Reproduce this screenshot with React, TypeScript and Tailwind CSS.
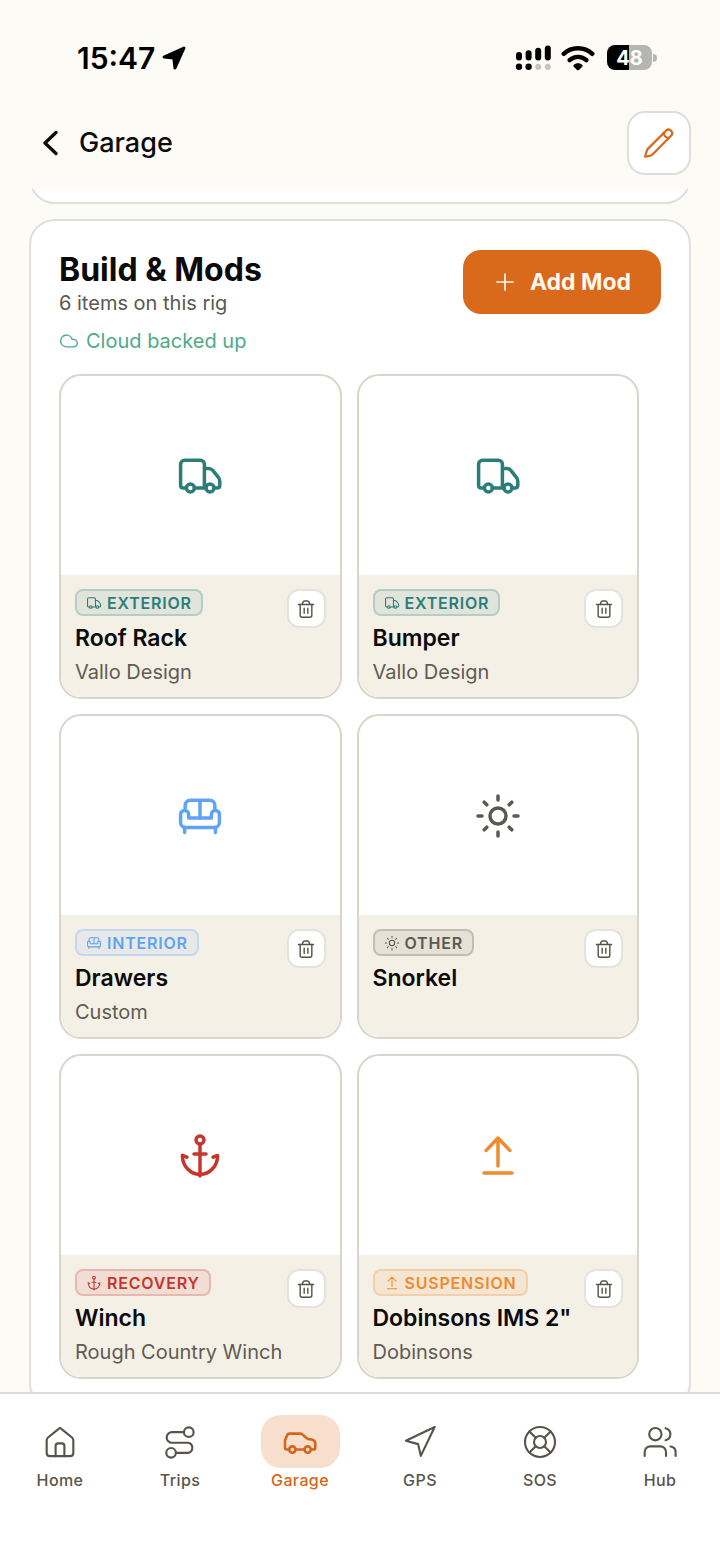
import React from 'react';
import clsx from 'clsx';
import { Cloud, LifeBuoy } from 'lucide-react';

type IconProps = { className?: string };

const Icon: React.FC<IconProps & { children: React.ReactNode }> = ({ className, children }) => (
  <svg
    viewBox="0 0 24 24"
    fill="none"
    stroke="currentColor"
    strokeLinecap="round"
    strokeLinejoin="round"
    aria-hidden="true"
    className={clsx('shrink-0 overflow-visible', className)}
  >
    {children}
  </svg>
);

const TruckIcon: React.FC<IconProps> = ({ className }) => (
  <Icon className={className}>
    <path d="M5 18H3.7C2.9 18 2.3 17.4 2.3 16.6V6.1a2 2 0 0 1 2-2h7.9a2 2 0 0 1 2 2V18M9.2 18H15" />
    <path d="M14.2 8.2h2c1 0 1.6.3 2.2 1l2.6 3.2c.6.7.9 1.3.9 2.2v2c0 .9-.5 1.4-1.4 1.4H19" />
    <circle cx="7.2" cy="18" r="2" />
    <circle cx="17" cy="18" r="2" />
  </Icon>
);

const SofaIcon: React.FC<IconProps> = ({ className }) => (
  <Icon className={className}>
    <path d="M4.6 8.8V6.6a2.5 2.5 0 0 1 2.5-2.5h9.8a2.5 2.5 0 0 1 2.5 2.5v2.2M12 4.1V13" />
    <path d="M6.3 13h11.4v-1.8a2 2 0 0 1 4 0v4.1a2.5 2.5 0 0 1-2.5 2.5H4.8a2.5 2.5 0 0 1-2.5-2.5v-4.1a2 2 0 0 1 4 0V13Z" />
    <path d="M4.3 17.8v2.4M19.7 17.8v2.4" />
  </Icon>
);

const SunIcon: React.FC<IconProps> = ({ className }) => (
  <Icon className={className}>
    <circle cx="12" cy="12" r="4" />
    <path d="M12 2v2M12 20v2M2 12h2M20 12h2M5.1 5.1l1.3 1.3M17.6 17.6l1.3 1.3M5.1 18.9l1.3-1.3M17.6 6.4l1.3-1.3" />
  </Icon>
);

const AnchorIcon: React.FC<IconProps> = ({ className }) => (
  <Icon className={className}>
    <circle cx="12" cy="4" r="2" />
    <path d="M12 6v16M9 11h6" />
    <path d="M5.5 12.6l-2.3-.9c0 5.2 3.8 9.5 8.8 9.5s8.8-4.3 8.8-9.5l-2.3.9" />
  </Icon>
);

const LiftIcon: React.FC<IconProps> = ({ className }) => (
  <Icon className={className}>
    <path d="M12 17V3M6.1 9.2 12 3l5.9 6.2M5 20.5h14" />
  </Icon>
);

const TrashIcon: React.FC<IconProps> = ({ className }) => (
  <Icon className={className}>
    <path d="M3 6.5h18M7.5 6.5 8.3 4c.3-1.1.9-1.7 2-1.7h3.4c1.1 0 1.7.6 2 1.7l.8 2.5" />
    <path d="M5 6.5v13c0 1.5 1 2.3 2.3 2.3h9.4c1.3 0 2.3-.8 2.3-2.3v-13M9.8 11v6M14.2 11v6" />
  </Icon>
);

const PencilIcon: React.FC<IconProps> = ({ className }) => (
  <Icon className={className}>
    <path d="M17.4 2.6 3.6 16.4c-.5.5-.7 1-.8 1.6L1.6 22.3l4.2-.9c.7-.2 1.200-.6 1.700-1.100L21.200 6.400a2.700 2.700 0 0 0-3.800-3.800Z" />
    <path d="M15.600 4.400c.1 2.200 1.600 3.800 3.800 3.800" />
  </Icon>
);

const HomeIcon: React.FC<IconProps> = ({ className }) => (
  <Icon className={className}>
    <path d="M2 10.7c0-.9.3-1.5 1-2.1l8-6.5c.7-.6 1.3-.6 2 0l8 6.5c.7.6 1 1.2 1 2.1V20c0 1.6-.8 2.6-2.4 2.6H4.4C2.8 22.6 2 21.6 2 20Z" />
    <path d="M8.7 22.6V15c0-1.4.7-2 1.9-2h2.8c1.2 0 1.9.6 1.9 2v7.6" />
  </Icon>
);

const RouteIcon: React.FC<IconProps> = ({ className }) => (
  <Icon className={className}>
    <circle cx="18.6" cy="4.6" r="3.6" />
    <circle cx="5.3" cy="20.1" r="3.6" />
    <path d="M15 4.6H6a4 4 0 0 0 0 8h12.2a3.9 3.9 0 0 1 0 7.6H8.9" />
  </Icon>
);

const CarIcon: React.FC<IconProps> = ({ className }) => (
  <Icon className={className}>
    <path d="M4.8 17H3.4C2.5 17 2 16.5 2 15.6v-4.2c0-.5.1-.9.3-1.3l1.1-2.6c.3-.8.8-1.1 1.6-1.1h7c.8 0 1.4.2 2 .8l2.2 2.1c.5.5 1 .7 1.7.8l1.9.3c1.6.3 2.4 1.1 2.4 2.7v2.5c0 .9-.5 1.4-1.4 1.4h-1.5M9 17h6" />
    <circle cx="6.9" cy="17" r="2.1" />
    <circle cx="17.1" cy="17" r="2.1" />
  </Icon>
);

const ArrowIcon: React.FC<IconProps> = ({ className }) => (
  <Icon className={className}>
    <path d="M23 .8 1.4 11l9.2 2.600 2 8.800Z" />
  </Icon>
);

const BuoyIcon: React.FC<IconProps> = ({ className }) => (
  <LifeBuoy className={className} strokeWidth={1.4} aria-hidden="true" />
);

const PeopleIcon: React.FC<IconProps> = ({ className }) => (
  <Icon className={className}>
    <circle cx="8.9" cy="6.8" r="4.1" />
    <path d="M1.8 21.3v-2.7a3.7 3.7 0 0 1 3.7-3.7h6.8a3.7 3.7 0 0 1 3.7 3.7v2.7" />
    <path d="M15.7 2.8a4.1 4.1 0 0 1 0 8M19 15c2.2.3 3.4 1.8 3.4 3.8v2.5" />
  </Icon>
);

const CATEGORIES = {
  exterior: { label: 'EXTERIOR', icon: TruckIcon, color: 'text-[#2a7d78]', badge: 'bg-[#e0e4db] border-[#b4cdc7]' },
  interior: { label: 'INTERIOR', icon: SofaIcon, color: 'text-[#60a3f3]', badge: 'bg-[#e6e9e8] border-[#c3d9ef]' },
  other: { label: 'OTHER', icon: SunIcon, color: 'text-[#5c584e]', badge: 'bg-[#e5e1d6] border-[#c2beb3]' },
  recovery: { label: 'RECOVERY', icon: AnchorIcon, color: 'text-[#c5362c]', badge: 'bg-[#f1ddd3] border-[#e7b8af]' },
  suspension: { label: 'SUSPENSION', icon: LiftIcon, color: 'text-[#ee8c2b]', badge: 'bg-[#f5e6d4] border-[#f4d0a8]' },
};

type Mod = { name: string; brand?: string; category: keyof typeof CATEGORIES };

const MODS: Mod[] = [
  { name: 'Roof Rack', brand: 'Vallo Design', category: 'exterior' },
  { name: 'Bumper', brand: 'Vallo Design', category: 'exterior' },
  { name: 'Drawers', brand: 'Custom', category: 'interior' },
  { name: 'Snorkel', category: 'other' },
  { name: 'Winch', brand: 'Rough Country Winch', category: 'recovery' },
  { name: 'Dobinsons IMS 2"', brand: 'Dobinsons', category: 'suspension' },
];

const TABS = [
  { label: 'Home', icon: HomeIcon, size: 'size-8 stroke-[1.6]' },
  { label: 'Trips', icon: RouteIcon, size: 'size-8 stroke-[1.6]' },
  { label: 'Garage', icon: CarIcon, size: 'size-9 stroke-[1.7]', active: true },
  { label: 'GPS', icon: ArrowIcon, size: 'size-8 stroke-[1.6]' },
  { label: 'SOS', icon: BuoyIcon, size: 'size-9' },
  { label: 'Hub', icon: PeopleIcon, size: 'size-9 stroke-[1.4]' },
];

const StatusBar: React.FC = () => (
  <div className="flex h-[111px] items-center justify-between pt-1 pr-[63px] pl-[77px] text-black">
    <div className="flex items-center gap-[7px]">
      <span className="text-[30px] leading-9 font-semibold">15:47</span>
      <svg viewBox="0 0 24 24" className="size-6" fill="currentColor" stroke="currentColor" strokeWidth="3" strokeLinejoin="round" aria-hidden="true">
        <path d="M22 2 2 11l9.8 1L13 22Z" />
      </svg>
    </div>
    <div className="flex items-center">
      <svg viewBox="0 0 36 26" className="mr-2.5 h-[26px] w-9" aria-hidden="true">
        <rect x="1" y="7" width="6" height="8.6" rx="3" />
        <rect x="10.6" y="5.2" width="6" height="10.4" rx="3" />
        <rect x="20.2" y="2.8" width="6" height="12.8" rx="3" />
        <rect x="29.8" y="0.5" width="6" height="15.1" rx="3" />
        <circle cx="4" cy="21.8" r="3.2" />
        <circle cx="13.6" cy="21.8" r="3.2" />
        <circle cx="23.2" cy="21.8" r="3.1" fill="#c4c4c1" />
        <circle cx="32.8" cy="21.8" r="3.1" fill="#c4c4c1" />
      </svg>
      <svg viewBox="0 0 34 26" className="mr-3 h-[26px] w-[34px]" fill="none" stroke="currentColor" strokeWidth="4.4" strokeLinecap="round" aria-hidden="true">
        <path d="M2.7 8.8C10.5 1.3 23.5 1.3 31.3 8.8" />
        <path d="M8.6 15.2C13.3 10.7 20.7 10.7 25.4 15.2" />
        <path d="M12.5 20.2C15 17.6 19 17.6 21.5 20.2 21.9 20.7 21.8 21.2 21.4 21.6L18.3 24.7C17.5 25.5 16.5 25.5 15.7 24.7L12.6 21.6C12.2 21.2 12.1 20.7 12.5 20.2Z" fill="currentColor" stroke="none" />
      </svg>
      <div className="flex h-[25px] w-[45px] items-center justify-center rounded-lg bg-[linear-gradient(90deg,#000_49%,#b5b5b2_49%)] text-xl leading-6 font-bold text-white">
        48
      </div>
      <span className="ml-px h-2 w-1 rounded-r-full bg-[#b5b5b2]" />
    </div>
  </div>
);

const ModCard: React.FC<{ mod: Mod }> = ({ mod }) => {
  const category = CATEGORIES[mod.category];
  const CategoryIcon = category.icon;

  return (
    <article className="flex flex-col overflow-hidden rounded-[22px] border-2 border-[#d8d5cc] bg-white">
      <div className={clsx('flex h-[199px] items-center justify-center', category.color)}>
        <CategoryIcon className="size-12 stroke-[1.75]" />
      </div>
      <div className="flex flex-1 justify-between bg-[#f4f0e6] px-3.5 pt-3.5 pb-3">
        <div className="min-w-0">
          <span
            className={clsx(
              'inline-flex h-[27px] items-center gap-[5px] rounded-lg border-2 px-[9px] align-top text-base leading-5 font-semibold tracking-wider',
              category.color,
              category.badge,
            )}
          >
            <CategoryIcon className="size-4 stroke-[1.6]" />
            {category.label}
          </span>
          <h3 className="mt-[7px] text-[23px] leading-[30px] font-semibold whitespace-nowrap text-[#0b0b0b]">{mod.name}</h3>
          {mod.brand && <p className="mt-1.5 text-xl leading-[26px] whitespace-nowrap text-[#5f5b52]">{mod.brand}</p>}
        </div>
        <button
          type="button"
          aria-label={`Delete ${mod.name}`}
          className="flex size-[39px] shrink-0 items-center justify-center rounded-xl border-2 border-[#e5e3df] bg-white text-[#55524a]"
        >
          <TrashIcon className="size-5 stroke-[1.7]" />
        </button>
      </div>
    </article>
  );
};

export default function App() {
  return (
    <div className="flex h-screen flex-col bg-[#fcfbf6] font-['Inter','Noto_Sans',sans-serif] text-[#0b0b0b]">
      <StatusBar />

      {/* Header */}
      <header className="flex items-center justify-between px-[29px] pb-3.5">
        <button type="button" className="flex items-center gap-[21px] pl-3.5 text-[27px] leading-9 font-medium">
          <svg viewBox="0 0 15 26" className="h-[26px] w-[15px]" fill="none" stroke="currentColor" strokeWidth="3.3" strokeLinecap="round" strokeLinejoin="round" aria-hidden="true">
            <path d="M13 2.5 2 13l11 10.5" />
          </svg>
          Garage
        </button>
        <button
          type="button"
          aria-label="Edit rig"
          className="flex size-16 items-center justify-center rounded-[18px] border-2 border-[#dededc] bg-white text-[#d9691b]"
        >
          <PencilIcon className="size-8 stroke-[1.7]" />
        </button>
      </header>

      <main className="min-h-0 flex-1 overflow-y-auto px-[29px] [scrollbar-width:none]">
        {/* Tail of the previous section */}
        <div className="flex h-[15px] items-end overflow-hidden">
          <div className="h-16 flex-1 rounded-[26px] border-2 border-[#dfdfdd] bg-white" />
        </div>

        <section className="mt-[15px] rounded-[26px] border-2 border-[#dfdfdd] bg-white px-7 pt-[29px] pb-7">
          <div className="flex items-start justify-between">
            <div>
              <h2 className="text-[32px] leading-10 font-bold">Build &amp; Mods</h2>
              <p className="text-xl leading-[26px] text-[#5a5850]">6 items on this rig</p>
              <p className="mt-3 flex items-center gap-[7px] text-xl leading-[26px] text-[#4bab86]">
                <Cloud className="size-5" strokeWidth={1.7} aria-hidden="true" />
                Cloud backed up
              </p>
            </div>
            <button
              type="button"
              className="flex h-16 items-center gap-[13px] rounded-[18px] bg-[#d9691b] px-[30px] text-[23px] leading-8 font-bold text-[#fff8ee]"
            >
              <Icon className="size-6 stroke-[1.7]">
                <path d="M12 4v16M4 12h16" />
              </Icon>
              Add Mod
            </button>
          </div>

          {/* Mod grid */}
          <div className="mt-5 grid grid-cols-2 gap-[15px] pr-[22px]">
            {MODS.map(mod => (
              <ModCard key={mod.name} mod={mod} />
            ))}
          </div>
        </section>
      </main>

      {/* Bottom tabs */}
      <nav className="grid h-[173px] shrink-0 grid-cols-6 items-start border-t-2 border-[#dcdcda] bg-white pt-[21px]">
        {TABS.map(({ label, icon: TabIcon, size, active }) => (
          <a
            key={label}
            href={`#${label.toLowerCase()}`}
            aria-current={active ? 'page' : undefined}
            className={clsx(
              'flex flex-col items-center text-base leading-6 font-medium tracking-wide',
              active ? 'text-[#d5651a]' : 'text-[#57544b]',
            )}
          >
            <span className={clsx('flex h-[53px] w-[79px] items-center justify-center rounded-[20px]', active && 'bg-[#f7decd]')}>
              <TabIcon className={size} />
            </span>
            {label}
          </a>
        ))}
      </nav>
    </div>
  );
}
